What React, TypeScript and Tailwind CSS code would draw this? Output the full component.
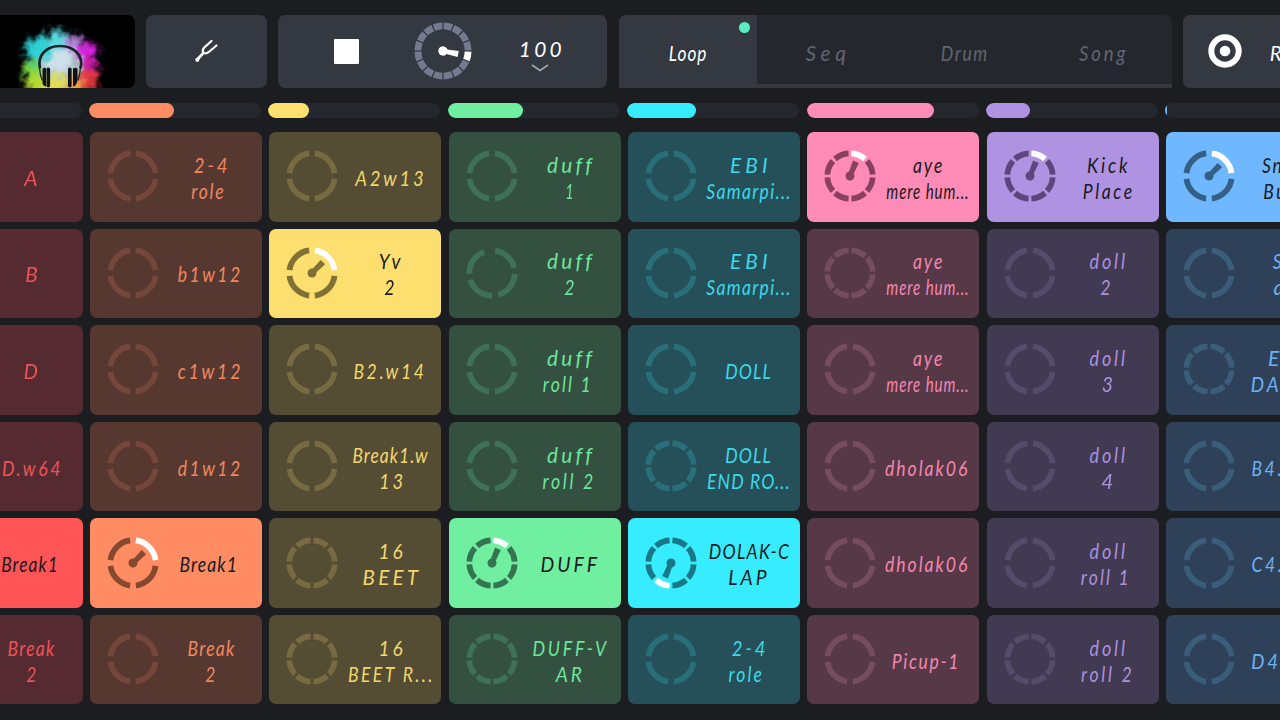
import React, { useLayoutEffect, useRef, useState } from "react";

// [text, width, horizontal nudge]
type Line = [string, number, number?];

interface Pad {
  lines: Line[];
  segs?: 4 | 8;
  active?: number; // index of the lit segment
  arcs?: number[][];
}

interface Track {
  id: string;
  bg: string;
  on: string;
  text: string;
  ring: string;
  ringOn: string;
  fill: string;
  level: number;
  pads: Pad[];
}

const tracks: Track[] = [
  {
    id: "red",
    bg: "bg-[#552a30]",
    on: "bg-[#ff5557]",
    text: "text-[#ee5359]",
    ring: "#75383e",
    ringOn: "#80302f",
    fill: "bg-[#ff5557]",
    level: 0,
    pads: [
      { lines: [["A", 12]] },
      { lines: [["B", 11]] },
      { lines: [["D", 13]] },
      { lines: [["D.w64", 57]] },
      { lines: [["Break1", 55, -2]], active: 0 },
      { lines: [["Break", 45], ["2", 9]] },
    ],
  },
  {
    id: "orange",
    bg: "bg-[#563831]",
    on: "bg-[#ff8c62]",
    text: "text-[#f0885f]",
    ring: "#75463a",
    ringOn: "#854930",
    fill: "bg-[#ff8c62]",
    level: 85,
    pads: [
      { lines: [["2-4", 32], ["role", 31, -3]] },
      { lines: [["b1w12", 61, -1.5]] },
      { lines: [["c1w12", 61, -1.5]] },
      { lines: [["d1w12", 61, -1.5]] },
      { lines: [["Break1", 56, -2.5]], active: 0 },
      { lines: [["Break", 45], ["2", 9]] },
    ],
  },
  {
    id: "yellow",
    bg: "bg-[#544c33]",
    on: "bg-[#fddf6f]",
    text: "text-[#f2d76c]",
    ring: "#786b42",
    ringOn: "#7f7035",
    fill: "bg-[#fddf6f]",
    level: 41,
    pads: [
      { lines: [["A2w13", 67]] },
      { lines: [["Yv", 20], ["2", 9]], active: 0 },
      { lines: [["B2.w14", 69, -1]] },
      { lines: [["Break1.w", 74], ["13", 23, 1]] },
      { lines: [["16", 23, 1], ["BEET", 54]], segs: 8 },
      { lines: [["16", 23, 1], ["BEET R...", 83]], segs: 8 },
    ],
  },
  {
    id: "green",
    bg: "bg-[#335040]",
    on: "bg-[#70efa1]",
    text: "text-[#6ce69b]",
    ring: "#3f7058",
    ringOn: "#34754f",
    fill: "bg-[#70efa1]",
    level: 75,
    pads: [
      { lines: [["duff", 43], ["1", 7]] },
      {
        lines: [["duff", 43], ["2", 9]],
        arcs: [[8, 77], [92, 164], [179, 253], [268, 340]],
      },
      { lines: [["duff", 43], ["roll 1", 46, -2.5]] },
      { lines: [["duff", 43], ["roll 2", 49, -1.5]] },
      { lines: [["DUFF", 55]], segs: 8, active: 0 },
      { lines: [["DUFF-V", 72], ["AR", 25]], segs: 8 },
    ],
  },
  {
    id: "cyan",
    bg: "bg-[#265059]",
    on: "bg-[#38ecff]",
    text: "text-[#3bd9e9]",
    ring: "#286f7a",
    ringOn: "#187885",
    fill: "bg-[#38ecff]",
    level: 69,
    pads: [
      { lines: [["EBI", 36], ["Samarpi...", 83]] },
      { lines: [["EBI", 36], ["Samarpi...", 83]] },
      { lines: [["DOLL", 44]] },
      { lines: [["DOLL", 44], ["END RO...", 81]], segs: 8 },
      { lines: [["DOLAK-C", 79], ["LAP", 37, -1]], segs: 8, active: 4 },
      { lines: [["2-4", 32], ["role", 32, -3]] },
    ],
  },
  {
    id: "pink",
    bg: "bg-[#563846]",
    on: "bg-[#ff8bb6]",
    text: "text-[#f586b0]",
    ring: "#754c60",
    ringOn: "#87405f",
    fill: "bg-[#ff8bb6]",
    level: 127.5,
    pads: [
      { lines: [["aye", 28], ["mere hum...", 81]], segs: 8, active: 0 },
      { lines: [["aye", 28], ["mere hum...", 81]], segs: 8 },
      { lines: [["aye", 28], ["mere hum...", 81]] },
      { lines: [["dholak06", 81, -1.5]] },
      { lines: [["dholak06", 81, -1.5]] },
      { lines: [["Picup-1", 65, -2.5]] },
    ],
  },
  {
    id: "purple",
    bg: "bg-[#413a52]",
    on: "bg-[#b092e3]",
    text: "text-[#ac90de]",
    ring: "#554c6c",
    ringOn: "#60457d",
    fill: "bg-[#b092e3]",
    level: 44,
    pads: [
      { lines: [["Kick", 39], ["Place", 48]], segs: 8, active: 0 },
      { lines: [["doll", 34], ["2", 9, -2]] },
      { lines: [["doll", 34], ["3", 10]] },
      { lines: [["doll", 34], ["4", 11]] },
      { lines: [["doll", 34], ["roll 1", 46, -2.5]] },
      { lines: [["doll", 34], ["roll 2", 49, -1]], segs: 8 },
    ],
  },
  {
    id: "blue",
    bg: "bg-[#2f4158]",
    on: "bg-[#6fb7ff]",
    text: "text-[#6db2f5]",
    ring: "#3a5d7a",
    ringOn: "#355f85",
    fill: "bg-[#6fb7ff]",
    level: 1.5,
    pads: [
      { lines: [["Snare", 47], ["Build", 45]], active: 0 },
      { lines: [["Sid", 27], ["ac", 24]] },
      { lines: [["EBI", 36], ["DANCE", 70]], segs: 8 },
      { lines: [["B4.w14", 69]] },
      { lines: [["C4.w14", 69]] },
      { lines: [["D4w14", 69]] },
    ],
  },
];

const polar = (c: number, r: number, deg: number) => {
  const a = ((deg - 90) * Math.PI) / 180;
  return `${c + r * Math.cos(a)} ${c + r * Math.sin(a)}`;
};

const arc = (c: number, r: number, from: number, to: number) =>
  `M${polar(c, r, from)} A${r} ${r} 0 0 1 ${polar(c, r, to)}`;

// Narrow slanted lettering, tracked out until the line fills its width
const Script: React.FC<{ text: string; width: number; dx?: number }> = ({ text, width, dx = 0 }) => {
  const ref = useRef<HTMLSpanElement>(null);
  const [fit, setFit] = useState({ scale: 1, tracking: 0 });

  useLayoutEffect(() => {
    const el = ref.current;
    if (!el) return;
    el.style.letterSpacing = "0px";
    const natural = el.offsetWidth;
    const gaps = text.length - 1;
    const target = width + 1.5;
    const tight = Math.min(0.8, target / (natural + gaps * 1.3));
    const loose = Math.min(0.95, target / (natural + gaps * 3.4));
    const scale = Math.max(tight, loose);
    const tracking = gaps > 0 ? (target / scale - natural) / gaps : 0;
    el.style.letterSpacing = `${tracking}px`;
    setFit({ scale, tracking });
  }, [text, width]);

  return (
    <span
      ref={ref}
      className="block w-max shrink-0 whitespace-nowrap font-['Lato',sans-serif] text-[22px] leading-[26px] italic"
      style={{
        letterSpacing: fit.tracking,
        transform: `translateX(${dx + (fit.tracking * fit.scale) / 2}px) scaleX(${fit.scale})`,
      }}
    >
      {text}
    </span>
  );
};

const Gauge: React.FC<{ pad: Pad; track: Track }> = ({ pad, track }) => {
  const n = pad.segs ?? 4;
  const step = 360 / n;
  const gap = n === 4 ? 7.2 : 3.6;
  const on = pad.active !== undefined;
  const arcs = pad.arcs ?? Array.from({ length: n }, (_, i) => [i * step + gap, (i + 1) * step - gap]);

  return (
    <svg className="-mt-px ml-[17px] size-[52px] shrink-0" viewBox="0 0 52 52" fill="none">
      {arcs.map(([from, to], i) => (
        <path
          key={i}
          d={arc(26, 22.7, from, to)}
          stroke={pad.active === i ? "#fff" : on ? track.ringOn : track.ring}
          strokeWidth={5.8}
        />
      ))}
      {on && (
        <g transform={`rotate(${(pad.active! + 0.5) * step} 26 26)`} fill={track.ringOn}>
          <circle cx="26" cy="26" r="4.5" />
          <path d="M23.6 26 L22.9 10.6 H29.1 L28.4 26Z" />
        </g>
      )}
    </svg>
  );
};

const PadCell: React.FC<{ pad: Pad; track: Track }> = ({ pad, track }) => {
  const on = pad.active !== undefined;
  return (
    <div
      className={`flex h-[89.5px] items-center rounded-[7px] ${on ? track.on : track.bg} ${
        on ? "text-[#191a20]" : track.text
      }`}
    >
      <Gauge pad={pad} track={track} />
      <div className="flex min-w-0 flex-1 flex-col items-center pt-[2px]">
        {pad.lines.map(([text, width, dx], i) => (
          <Script key={i} text={text} width={width} dx={dx} />
        ))}
      </div>
    </div>
  );
};

const Cover: React.FC = () => (
  <div className="h-full w-[134.5px] shrink-0 overflow-hidden rounded-r-[7px] bg-black">
    <svg className="block h-full w-full" viewBox="0 14.5 134.5 73.5">
      <defs>
        <filter id="smoke" x="-20%" y="-20%" width="140%" height="140%" colorInterpolationFilters="sRGB">
          <feGaussianBlur stdDeviation="3" result="b" />
          <feTurbulence type="fractalNoise" baseFrequency="0.13" numOctaves="2" seed="7" />
          <feDisplacementMap in="b" scale="14" xChannelSelector="R" yChannelSelector="G" />
        </filter>
      </defs>
      <g filter="url(#smoke)">
        <circle cx="60" cy="67" r="31" fill="#a9c4c6" />
        <circle cx="38" cy="49" r="13" fill="#2fd0d6" />
        <circle cx="57" cy="39" r="10" fill="#56d8e0" />
        <circle cx="74" cy="43" r="9" fill="#b487dc" />
        <circle cx="87" cy="51" r="10" fill="#d423dc" />
        <circle cx="90" cy="66" r="8" fill="#cf1fa0" />
        <circle cx="87" cy="81" r="11" fill="#e0383f" />
        <circle cx="32" cy="70" r="10" fill="#7ad645" />
        <circle cx="36" cy="84" r="10" fill="#b2d82f" />
        <circle cx="54" cy="84" r="11" fill="#e2de55" />
        <circle cx="74" cy="84" r="9" fill="#eea548" />
        <circle cx="60" cy="60" r="13" fill="#cfe0ec" />
      </g>
      <g fill="none" stroke="#1c2229">
        <path d="M40 68 C37 54 47 45.5 60 45.5 C73 45.5 84 54 80.5 68" strokeWidth="2.6" />
        <path d="M39.5 64 Q39.5 74 42.5 80 M80.5 64 Q80.5 74 77.5 80" strokeWidth="1.3" />
      </g>
      <g fill="#101317">
        <path d="M42.5 68.5 Q44.500 66.5 46 68 V86 Q43.5 86 42.5 83Z" />
        <rect x="46.5" y="67" width="3.6" height="20" rx="1.8" />
        <rect x="68" y="67" width="3.6" height="20" rx="1.8" />
        <path d="M77.5 68.5 Q75.5 66.5 73 68 V86 Q76.5 86 77.5 79Z" />
      </g>
    </svg>
  </div>
);

const TuningFork = () => (
  <svg className="size-[26px]" viewBox="0 0 26 26" fill="none" stroke="#fff" strokeWidth="2.2" strokeLinecap="round">
    <path d="M18.5 3 L11 9.8 Q9 12 10.3 15 Q13.5 16 15.800 14 L23.5 7.5" />
    <path d="M10.3 15 L4.8 21" strokeWidth="2.6" />
    <circle cx="4.3" cy="21.8" r="1" fill="#fff" />
  </svg>
);

const Clock = () => (
  <svg className="size-[58px]" viewBox="0 0 58 58" fill="none">
    {Array.from({ length: 16 }, (_, i) => (
      <path
        key={i}
        d={arc(29, 25.1, i * 22.5 + 1.5, (i + 1) * 22.5 - 1.5)}
        stroke={i === 4 ? "#fff" : "#747b90"}
        strokeWidth={6.8}
      />
    ))}
    <g transform="rotate(101 29 29)" fill="#fff">
      <circle cx="29" cy="29" r="4.7" />
      <path d="M27 29 L26 13.5 H32 L31 29Z" />
    </g>
  </svg>
);

const tabs: Line[] = [
  ["Loop", 36],
  ["Seq", 39],
  ["Drum", 45],
  ["Song", 45],
];

const Header: React.FC = () => (
  <header className="flex h-[73.5px] w-[1400px] gap-[11.4px]">
    <Cover />

    <div className="flex w-[121px] shrink-0 items-center justify-center rounded-[7px] bg-[#343840]">
      <TuningFork />
    </div>

    {/* Transport */}
    <div className="flex w-[329px] shrink-0 items-center rounded-[7px] bg-[#343840]">
      <div className="ml-[56px] size-[25px] rounded-[1px] bg-white" />
      <div className="ml-[54.5px]">
        <Clock />
      </div>
      <div className="ml-[43px] flex w-[50px] flex-col items-center text-white">
        <div className="mt-[6px]">
          <Script text="100" width={41} />
        </div>
        <svg className="mt-0.5 h-2 w-[18px] shrink-0" viewBox="0 0 18 8" fill="none" stroke="#a2a6ae" strokeWidth="1.7">
          <path d="M1 1 L9 6.5 L17 1" />
        </svg>
      </div>
    </div>

    {/* Mode tabs */}
    <nav className="grid w-[553px] shrink-0 grid-cols-4 overflow-hidden rounded-t-[7px] bg-[#24272e]">
      {tabs.map(([name, width], i) => (
        <div
          key={name}
          className={`relative flex items-center justify-center pt-[4px] ${
            i === 0 ? "bg-[#343840] text-white" : "text-[#62656d] shadow-[inset_0_-4px_0_#34383d]"
          }`}
        >
          <Script text={name} width={width} />
          {i === 0 && <span className="absolute top-[7.5px] right-[7px] size-[11px] rounded-full bg-[#5cecc0]" />}
        </div>
      ))}
    </nav>

    <div className="flex flex-1 items-center rounded-[7px] bg-[#343840] pl-[25px] text-white">
      <svg className="size-[34px] shrink-0" viewBox="0 0 34 34" fill="none">
        <circle cx="17" cy="17" r="13.7" stroke="#fff" strokeWidth="6" />
        <circle cx="17" cy="17" r="5.3" fill="#fff" />
      </svg>
      <div className="mt-[4px] ml-[25px]">
        <Script text="Rec" width={36} />
      </div>
    </div>
  </header>
);

const App: React.FC = () => {
  return (
    <main className="h-[720px] w-[1280px] overflow-hidden bg-[#1c1d20] pt-[14.5px]">
      <Header />

      {/* Track positions */}
      <div className="mt-[14.5px] -ml-[90.3px] flex gap-[7.4px]">
        {tracks.map((t) => (
          <div key={t.id} className="h-[15px] w-[172px] shrink-0 overflow-hidden rounded-full bg-[#24272e]">
            <div className={`h-full rounded-full ${t.fill}`} style={{ width: t.level }} />
          </div>
        ))}
      </div>

      <div className="mt-[14.5px] -ml-[89.35px] flex gap-[7.35px]">
        {tracks.map((t) => (
          <div key={t.id} className="flex w-[172px] shrink-0 flex-col gap-[7.1px]">
            {t.pads.map((pad, i) => (
              <PadCell key={i} pad={pad} track={t} />
            ))}
          </div>
        ))}
      </div>
    </main>
  );
};

export default App;
